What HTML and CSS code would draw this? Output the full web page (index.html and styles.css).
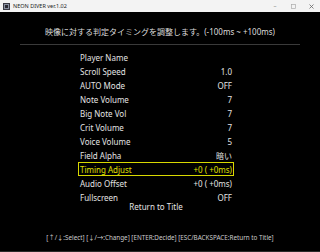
FILE: index.html
```html
<!DOCTYPE html>
<html lang="ja">
<head>
  <meta charset="UTF-8">
  <title>NEON DIVER ver.1.02</title>
  <link rel="stylesheet" href="styles.css">
</head>
<body>
  <div class="window">
    <div class="titlebar">
      <svg class="app-icon" width="7" height="7" viewBox="0 0 7 7">
        <rect x="0" y="0" width="7" height="7" fill="#3a3a44"/>
        <rect x="1" y="1" width="5" height="5" fill="#8890a0"/>
        <rect x="2" y="2" width="3" height="3" fill="#2a2a33"/>
      </svg>
      <span class="title">NEON DIVER ver.1.02</span>
      <div class="controls">
        <span class="ctl">&#8211;</span>
        <span class="ctl"><svg width="5" height="5" viewBox="0 0 5 5"><rect x="0.5" y="0.5" width="4" height="4" fill="none" stroke="#aaa" stroke-width="0.7"/></svg></span>
        <span class="ctl"><svg width="5" height="5" viewBox="0 0 5 5"><path d="M0.5 0.5 L4.5 4.5 M4.5 0.5 L0.5 4.5" stroke="#666" stroke-width="0.8"/></svg></span>
      </div>
    </div>
    <div class="screen">
      <p class="help">映像に対する判定タイミングを調整します。(-100ms ~ +100ms)</p>
      <hr class="sep">
      <ul class="menu">
        <li class="row"><span>Player Name</span><span></span></li>
        <li class="row"><span>Scroll Speed</span><span>1.0</span></li>
        <li class="row"><span>AUTO Mode</span><span>OFF</span></li>
        <li class="row"><span>Note Volume</span><span>7</span></li>
        <li class="row"><span>Big Note Vol</span><span>7</span></li>
        <li class="row"><span>Crit Volume</span><span>7</span></li>
        <li class="row"><span>Voice Volume</span><span>5</span></li>
        <li class="row"><span>Field Alpha</span><span>暗い</span></li>
        <li class="row selected"><span>Timing Adjust</span><span>+0 ( +0ms)</span></li>
        <li class="row"><span>Audio Offset</span><span>+0 ( +0ms)</span></li>
        <li class="row"><span>Fullscreen</span><span>OFF</span></li>
        <li class="back">Return to Title</li>
      </ul>
      <p class="keys">[↑/↓:Select] [↓/→:Change] [ENTER:Decide] [ESC/BACKSPACE:Return to Title]</p>
    </div>
  </div>
</body>
</html>
```

FILE: styles.css
```css
html, body {
  margin: 0;
  padding: 0;
  background: #000;
}

body {
  width: 320px;
  height: 252px;
  overflow: hidden;
  font-family: "Noto Sans", "Noto Sans CJK JP", sans-serif;
}

.window {
  height: 252px;
  display: flex;
  flex-direction: column;
}

.titlebar {
  height: 12px;
  background: #f3f3f3;
  display: flex;
  align-items: center;
  padding-left: 3px;
}
.app-icon {
  margin-right: 3px;
}
.title {
  font-size: 5.5px;
  color: #222;
}
.controls {
  margin-left: auto;
  display: flex;
  height: 12px;
}
.ctl {
  width: 18px;
  display: flex;
  align-items: center;
  justify-content: center;
  font-size: 6px;
  color: #777;
}

.screen {
  flex: 1;
  background: #000;
  color: #e4e4e4;
  display: flex;
  flex-direction: column;
  border-bottom: 1px solid #2a2a2a;
}

.help {
  margin: 14px 0 0;
  text-align: center;
  font-size: 8px;
  line-height: 12px;
  color: #ddd;
}
.sep {
  width: 280px;
  margin: 6px auto 0;
  border: none;
  border-top: 1px solid #3a3a3a;
}

.menu {
  list-style: none;
  margin: 5px 0 0 78px;
  padding: 0;
  width: 156px;
}
.row {
  display: flex;
  justify-content: space-between;
  height: 14px;
  line-height: 13px;
  font-size: 8px;
  padding: 0 1px;
  box-sizing: border-box;
  border: 1px solid transparent;
}
.row.selected {
  border-color: #d8d800;
  color: #e0e000;
}
.back {
  text-align: center;
  font-size: 8px;
  line-height: 10px;
  margin-top: -2px;
}

.keys {
  margin: auto 0 9px;
  text-align: center;
  font-size: 6.3px;
  color: #ccc;
}
```
